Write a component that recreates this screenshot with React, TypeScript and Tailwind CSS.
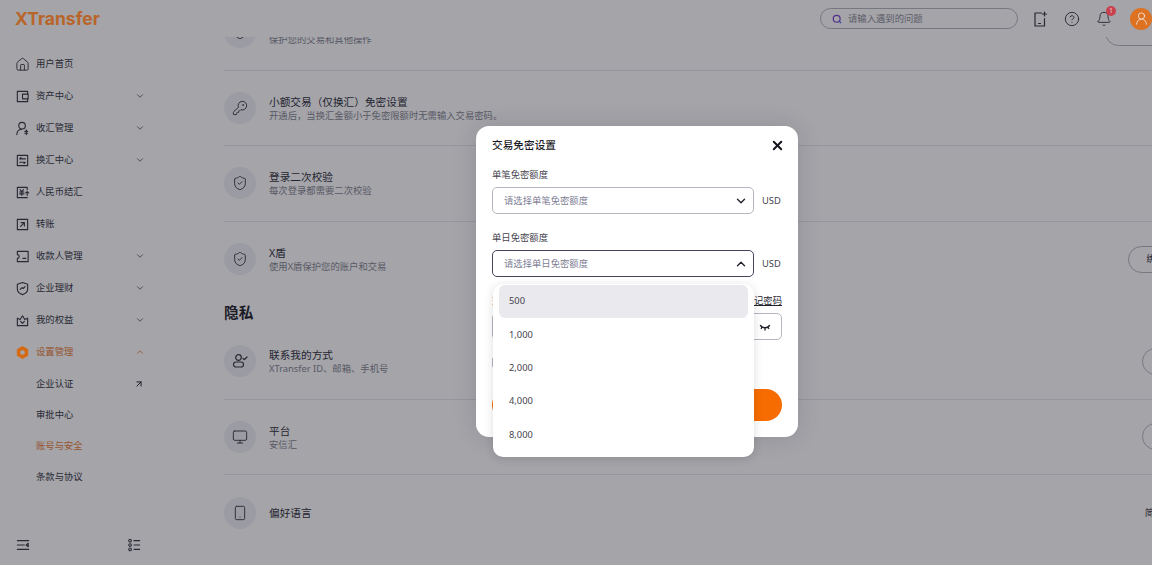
import { ArrowUpRight, Bell, ChevronDown, ChevronUp, CircleHelp, House, KeyRound, Monitor, ShieldCheck, Smartphone, UserRound, X } from "lucide-react";
import type { ReactNode } from "react";

const Svg = ({ children, className = "h-[15px] w-[15px]" }: { children: ReactNode; className?: string }) => (
  <svg viewBox="0 0 16 16" fill="none" stroke="currentColor" strokeWidth="1.2" strokeLinecap="round" strokeLinejoin="round" className={className}>
    {children}
  </svg>
);

const WalletIcon = () => (
  <Svg>
    <path d="M13.5 5V2.5h-11v11h11V11" />
    <path d="M8 5.5h6v5H8z" />
  </Svg>
);
const ReceiveIcon = () => (
  <Svg>
    <circle cx="7.5" cy="5" r="3.5" />
    <path d="M2 14.5c0-3.2 2-5.5 5-5.7" />
    <path d="M12 9.5v5M10.5 11h3M10.5 13h3" />
  </Svg>
);
const ExchangeIcon = () => (
  <Svg>
    <path d="M2.5 2.5h11v11h-11z" />
    <path d="M11 6.2H5l1.4-1.4M5 9.8h6l-1.4 1.4" />
  </Svg>
);
const RmbIcon = () => (
  <Svg>
    <path d="M13 5V2.5H2.5v11H13V13" />
    <path d="M5.5 5l1.7 2.2L9 5M5 7.5h4.5M5 9.5h4.5M7.2 7.5V11" />
    <path d="M13 11V7M11.5 8.5L13 7l1.5 1.5" />
  </Svg>
);
const TransferIcon = () => (
  <Svg>
    <path d="M2.5 2.5h11v11h-11z" />
    <path d="M6 10l4-4M6.5 6H10v3.5" />
  </Svg>
);
const PayeeIcon = () => (
  <Svg>
    <path d="M2.5 2.5h11.5v11H2.5v-3.5a2 2 0 0 0 0-4z" />
    <path d="M8.5 10h3" />
  </Svg>
);
const WealthIcon = () => (
  <Svg>
    <path d="M8 1.5l5.5 2v5c0 3-2.5 5-5.5 6-3-1-5.5-3-5.5-6v-5z" />
    <path d="M5.5 9l2-2 1.2 1 2-2" />
  </Svg>
);
const CrownIcon = () => (
  <Svg>
    <path d="M2.5 5.5l3 1.5L8 3l2.5 4 3-1.5v8h-11z" />
    <path d="M6 9l2 2 2-2" />
  </Svg>
);
const SettingIcon = () => (
  <svg viewBox="0 0 16 16" className="h-[15px] w-[15px] text-[#d66a12]">
    <path fill="currentColor" fillRule="evenodd" d="M8 1l6 3.5v7L8 15l-6-3.5v-7zM8 5.5a2.5 2.5 0 1 0 0 5 2.5 2.5 0 0 0 0-5z" />
  </svg>
);
const PhonePlusIcon = () => (
  <Svg className="h-[18px] w-[16px]">
    <path d="M9.5 2H3v13h9.5V7.5" />
    <path d="M12.5 1v4M10.5 3h4M6.5 12.5h2" />
  </Svg>
);
const ContactIcon = () => (
  <Svg className="h-[16px] w-[16px]">
    <circle cx="6.5" cy="4.5" r="2.8" />
    <rect x="1.5" y="9" width="10" height="5" rx="2.5" />
    <path d="M11 5.5l1.2 1.2L15 4" />
  </Svg>
);

const navItems: { label: string; icon: ReactNode; arrow?: boolean }[] = [
  { label: "用户首页", icon: <House className="h-[15px] w-[15px]" strokeWidth={1.5} /> },
  { label: "资产中心", icon: <WalletIcon />, arrow: true },
  { label: "收汇管理", icon: <ReceiveIcon />, arrow: true },
  { label: "换汇中心", icon: <ExchangeIcon />, arrow: true },
  { label: "人民币结汇", icon: <RmbIcon /> },
  { label: "转账", icon: <TransferIcon /> },
  { label: "收款人管理", icon: <PayeeIcon />, arrow: true },
  { label: "企业理财", icon: <WealthIcon />, arrow: true },
  { label: "我的权益", icon: <CrownIcon />, arrow: true },
];

const Row = ({ icon, title, desc, right, last }: { icon: ReactNode; title: string; desc?: string; right?: ReactNode; last?: boolean }) => (
  <div className={`flex h-[75.5px] items-center ${last ? "" : "border-b border-[#e6e6ec]"}`}>
    <div className="flex h-8 w-8 shrink-0 items-center justify-center rounded-full bg-[#f1f1f5] text-[#33333d]">{icon}</div>
    <div className={`ml-[13px] flex-1 ${desc ? "mt-[2px]" : ""}`}>
      <div className="text-[10.67px] leading-[14px] text-[#2b2b36]">{title}</div>
      {desc && <div className="text-[9.33px] leading-[14px] text-[#84848e]">{desc}</div>}
    </div>
    {right}
  </div>
);

const Pill = ({ children }: { children: ReactNode }) => (
  <div className="flex h-[27px] items-center rounded-full border border-[#b5b5bb] px-[18px] text-[9.33px] text-[#2b2b36]">{children}</div>
);

const Select = ({ text, open }: { text: string; open?: boolean }) => (
  <div className="flex items-center gap-2">
    <div className={`flex h-[27px] w-[262px] items-center justify-between rounded-[5px] pl-[11px] pr-[5px] text-[9.33px] text-[#7d7d94] ${open ? "border-[1.5px] border-[#44445a]" : "border border-[#b6b6c0]"}`}>
      <span>{text}</span>
      {open ? <ChevronUp className="h-[14px] w-[14px] text-[#22222c]" strokeWidth={2.4} /> : <ChevronDown className="h-[14px] w-[14px] text-[#22222c]" strokeWidth={2.4} />}
    </div>
    <span className="text-[9.33px] text-[#44444e]">USD</span>
  </div>
);

export default function App() {
  return (
    <div className="relative flex h-[567px] w-[1152px] flex-col overflow-hidden bg-white font-['Noto_Sans','Noto_Sans_CJK_SC',sans-serif]">
      <header className="flex h-[37px] shrink-0 items-center justify-between bg-white pl-[15px]">
        <span className="relative z-30 font-['Inter',sans-serif] text-[17.5px] font-bold leading-none text-[#b9652a]">XTransfer</span>
        <div className="flex items-center">
          <div className="flex h-[21px] w-[198px] items-center rounded-full border border-[#b5b5bb] pl-[11px] text-[9.33px] text-[#8a8a94]">
            <svg viewBox="0 0 16 16" fill="none" strokeWidth="2" className="mr-[6px] h-[10px] w-[10px]">
              <circle cx="7.5" cy="7.5" r="5.5" stroke="#7b3fd0" />
              <path d="M11.5 11.5l3 3" stroke="#3f6be0" />
            </svg>
            请输入遇到的问题
          </div>
          <div className="ml-[14px] flex items-center gap-4 text-[#33333d]">
            <PhonePlusIcon />
            <CircleHelp className="h-[16px] w-[16px]" strokeWidth={1.4} />
            <div className="relative">
              <Bell className="h-[16px] w-[16px]" strokeWidth={1.4} />
              <span className="absolute -right-[4px] -top-[5px] z-30 flex h-[10px] w-[10px] items-center justify-center rounded-full bg-[#c9404f] text-[7px] leading-none text-[#f0d0d4]">1</span>
            </div>
          </div>
          <div className="relative z-30 ml-[18px] flex h-[22px] w-[22px] items-center justify-center rounded-full bg-[#dd7222] text-[#f4dccb]">
            <UserRound className="h-[15px] w-[15px]" strokeWidth={1.5} />
          </div>
        </div>
      </header>

      <div className="flex min-h-0 flex-1">
        <aside className="flex w-[160px] shrink-0 flex-col pt-[11px] text-[9.33px] text-[#33333d]">
          {navItems.map((item) => (
            <div key={item.label} className="flex h-8 items-center pl-[15px] pr-[15px]">
              <span className="mr-[6px] flex w-[15px] justify-center">{item.icon}</span>
              <span className="flex-1">{item.label}</span>
              {item.arrow && <ChevronDown className="h-[10px] w-[10px] text-[#55555f]" strokeWidth={2} />}
            </div>
          ))}
          <div className="flex h-8 items-center pl-[15px] pr-[15px] text-[#e97b34]">
            <span className="relative z-30 mr-[6px] flex w-[15px] justify-center"><SettingIcon /></span>
            <span className="flex-1">设置管理</span>
            <ChevronUp className="h-[10px] w-[10px]" strokeWidth={2} />
          </div>
          <div className="flex h-[31px] items-center pl-[36px] pr-[16px]">
            <span className="flex-1">企业认证</span>
            <ArrowUpRight className="h-[10px] w-[10px] text-[#22222c]" strokeWidth={2.4} />
          </div>
          <div className="flex h-[31px] items-center pl-[36px]">审批中心</div>
          <div className="flex h-[31px] items-center pl-[36px] text-[#e97b34]">账号与安全</div>
          <div className="flex h-[31px] items-center pl-[36px]">条款与协议</div>
          <div className="mt-auto mb-[10px] flex h-6 items-center justify-between pl-[16px] pr-[19px] text-[#33333d]">
            <Svg className="h-[14px] w-[14px]">
              <path d="M1.5 3h13M1.5 13h13M1.5 8h8M14 6v4l-2.5-2z" />
            </Svg>
            <Svg className="h-[14px] w-[14px]">
              <circle cx="3.5" cy="3" r="1.5" />
              <circle cx="3.5" cy="8" r="1.5" />
              <circle cx="3.5" cy="13" r="1.5" />
              <path d="M8 3h6.5M8 8h6.5M8 13h6.5" />
            </Svg>
          </div>
        </aside>

        <main className="min-w-0 flex-1 overflow-hidden">
          <div className="-mt-[42px] ml-[64px] w-[975px]">
            <Row icon={<ShieldCheck className="h-[16px] w-[16px]" strokeWidth={1.4} />} title="交易密码" desc="保护您的交易和其他操作" right={<Pill>修改交易密码</Pill>} />
            <Row icon={<KeyRound className="h-[16px] w-[16px]" strokeWidth={1.4} />} title={"小额交易\uFF08仅换汇\uFF09免密设置"} desc={"开通后\uFF0C当换汇金额小于免密限额时无需输入交易密码\u3002"} />
            <Row icon={<ShieldCheck className="h-[16px] w-[16px]" strokeWidth={1.4} />} title="登录二次校验" desc="每次登录都需要二次校验" />
            <Row last icon={<ShieldCheck className="h-[16px] w-[16px]" strokeWidth={1.4} />} title="X盾" desc="使用X盾保护您的账户和交易" right={<Pill>绑定X盾</Pill>} />
            <h2 className="h-[27px] pt-[4px] text-[14.67px] font-bold leading-[22px] text-[#1c1c28]">隐私</h2>
            <Row icon={<ContactIcon />} title="联系我的方式" desc="XTransfer ID、邮箱、手机号" right={<Pill>设置</Pill>} />
            <Row icon={<Monitor className="h-[16px] w-[16px]" strokeWidth={1.4} />} title="平台" desc="安信汇" right={<Pill>设置</Pill>} />
            <Row last icon={<Smartphone className="h-[16px] w-[16px]" strokeWidth={1.4} />} title="偏好语言" right={<span className="pr-[17px] text-[9.33px] text-[#2b2b36]">简体中文</span>} />
          </div>
        </main>
      </div>

      <div className="absolute inset-x-0 top-0 z-20 h-[565px] bg-[#1c1c28]/40 pl-[476px] pt-[126px]">
        <div className="relative h-[311px] w-[322px] rounded-[13px] bg-white px-4 pt-[9px] shadow-[0_0_24px_rgba(28,28,40,0.14)]">
          <div className="flex h-[20px] items-center justify-between">
            <span className="text-[10.67px] font-medium text-[#1c1c28]">交易免密设置</span>
            <X className="-mr-[3px] h-[15px] w-[15px] text-[#14141c]" strokeWidth={3} />
          </div>
          <div className="mt-[11px] h-[20px] text-[9.33px] leading-[18px] text-[#44444e]">单笔免密额度</div>
          <div className="mt-[1px]"><Select text="请选择单笔免密额度" /></div>
          <div className="mt-[15px] h-[20px] text-[9.33px] leading-[18px] text-[#44444e]">单日免密额度</div>
          <div className="mt-[1px]"><Select open text="请选择单日免密额度" /></div>
          <div className="mt-[14px] flex h-[20px] items-center justify-between text-[9.33px] text-[#44444e]">
            <span>交易密码</span>
            <span className="text-[#22222c] underline">忘记密码</span>
          </div>
          <div className="mt-[2px] flex h-[27px] items-center justify-between rounded-[5px] border border-[#b6b6c0] pl-[11px] pr-[10px] text-[9.33px] text-[#7d7d94]">
            <span>请输入交易密码</span>
            <Svg className="h-[12px] w-[12px] text-[#22222c]">
              <path strokeWidth="1.8" d="M2 6c3 4 9 4 12 0M4 8l-1 2M8 9.5V12M12 8l1 2" />
            </Svg>
          </div>
          <div className="mt-[17px] h-[11px] w-[11px] rounded-[2px] border border-[#b6b6c0]" />
          <div className="mt-[21px] h-[32px] rounded-full bg-[#f76c00]" />

          <div className="absolute left-[17px] top-[158px] w-[261px] rounded-[10px] bg-white px-[6px] pb-[5px] pt-[0.6px] shadow-[0_2px_10px_rgba(28,28,40,0.15)]">
            {["500", "1,000", "2,000", "4,000", "8,000"].map((v, i) => (
              <div key={v} className={`flex h-[33.4px] items-center rounded-[6px] pl-[10px] text-[9.33px] text-[#44444e] ${i === 0 ? "bg-[#eaeaee]" : ""}`}>
                {v}
              </div>
            ))}
          </div>
        </div>
      </div>
    </div>
  );
}
